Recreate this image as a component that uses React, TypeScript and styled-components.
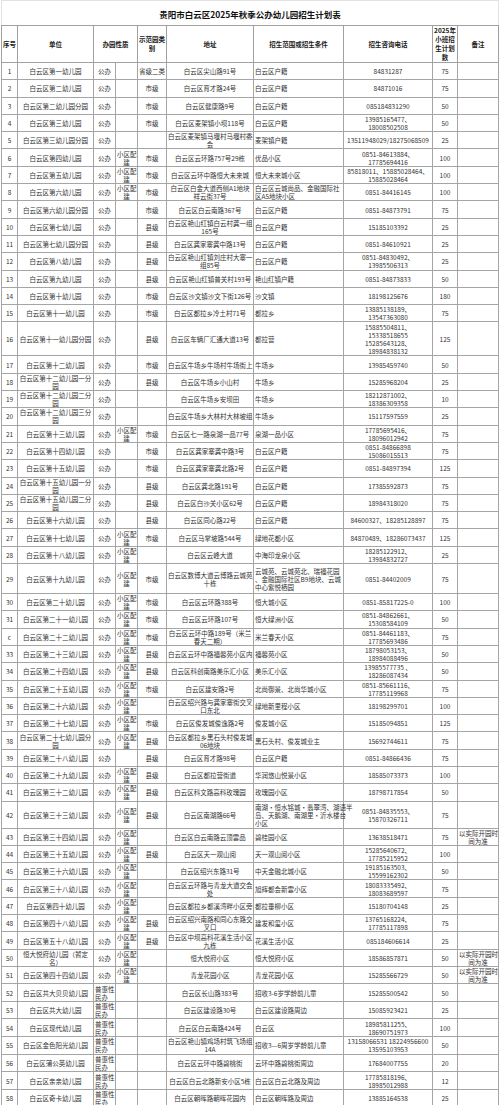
import React from "react";
import styled, { createGlobalStyle } from "styled-components";

const GlobalStyle = createGlobalStyle`
  html, body {
    margin: 0;
    padding: 0;
    background: #fff;
  }
  body {
    font-family: "Noto Sans CJK SC", sans-serif;
    color: #333;
  }
`;

const Page = styled.div`
  width: 500px;
  padding: 0 1px;
  box-sizing: border-box;
`;

const Sheet = styled.table`
  width: 497px;
  table-layout: fixed;
  border-collapse: collapse;
  font-size: 6.5px;
  line-height: 8px;
`;

const TitleCell = styled.th`
  height: 22px;
  padding: 2px 0 0;
  border: 1px solid #e2e2e2;
  border-bottom-color: #a0a0a0;
  font-size: 8.5px;
  line-height: 10px;
  font-weight: 700;
  color: #111;
  text-align: center;
`;

const HeadCell = styled.th`
  height: 35px;
  padding: 0 1px;
  border: 1px solid #a0a0a0;
  font-weight: 700;
  line-height: 9px;
  color: #222;
  text-align: center;
  vertical-align: middle;
`;

const Cell = styled.td<{ $align?: "left" | "center"; $h?: number }>`
  height: ${(p) => p.$h ?? 16.3}px;
  padding: 0 1px;
  border: 1px solid #a5a5a5;
  text-align: ${(p) => p.$align ?? "center"};
  vertical-align: middle;
  white-space: nowrap;
  overflow: visible;
  color: #333;
`;

const Text = styled.div`
  line-height: 8px;
`;

const widths = [16, 76, 22, 22, 29, 87, 90, 89, 25, 41];

// 序号, 单位, 办园性质, 配建, 示范园类别, 地址, 招生范围, 电话, 计划数, 备注, 行高
type Row = [string, string, string, string, string, string, string, string, string, string?, number?];

const B = "小区配|建";
const G = "公办";
const P = "普惠性|民办";
const HJ = "白云区户籍";
const NOTE = "以实际开园时|间为准";

const rows: Row[] = [
  ["1", "白云区第一幼儿园", G, "", "省级二类", "白云区尖山路91号", HJ, "84831287", "75"],
  ["2", "白云区第二幼儿园", G, "", "市级", "白云区育才路24号", HJ, "84871016", "75"],
  ["3", "白云区第二幼儿园分园", G, "", "市级", "白云区健康路9号", HJ, "085184831290", "50"],
  ["4", "白云区第三幼儿园", G, "", "市级", "白云区麦架镇小坝118号", HJ, "13985165477、|18008502508", "50"],
  ["5", "白云区第三幼儿园分园", G, "", "", "白云区麦架镇马堰村马堰村委|会", "麦架镇户籍", "13511948029/18275068509", "25"],
  ["6", "白云区第四幼儿园", G, B, "市级", "白云区云环路757号29栋", "优品小区", "0851-84613884、|17785694416", "100"],
  ["7", "白云区第五幼儿园", G, B, "市级", "白云区云环中路恒大未来城", "恒大未来城小区", "85818011、15885028464、|15885028464", "100"],
  ["8", "白云区第六幼儿园", G, B, "市级", "白云区白金大道西侧A1地块|祥云街37号", "白云区云城尚品、金融国际社|区A5地块小区", "0851-84416145", "100"],
  ["9", "白云区第六幼儿园分园", G, "", "市级", "白云区白云南路367号", HJ, "0851-84873791", "75"],
  ["10", "白云区第七幼儿园", G, "", "县级", "白云区艳山红镇白云村龚一组|165号", HJ, "15185103392", "25"],
  ["11", "白云区第七幼儿园分园", G, "", "县级", "白云区龚家寨龚中路13号", HJ, "0851-84610921", "25"],
  ["12", "白云区第八幼儿园", G, "", "县级", "白云区艳山红镇刘庄村大寨一|组85号", HJ, "0851-84830492、|13985506313", "25"],
  ["13", "白云区第九幼儿园", G, "", "县级", "白云区艳山红镇普关村193号", "艳山红镇户籍", "0851-84873833", "50"],
  ["14", "白云区第十幼儿园", G, "", "市级", "白云区沙文镇沙文下街126号", "沙文镇", "18198125676", "180"],
  ["15", "白云区第十一幼儿园", G, "", "市级", "白云区都拉乡冷土村71号", "都拉乡", "13885138189、|13547363080", "75"],
  ["16", "白云区第十一幼儿园分园", G, "", "县级", "白云区车辆厂汇通大道13号", "都拉营", "15885504811、|15338518655|15285643128、|18984838132", "125", "", 33],
  ["17", "白云区第十二幼儿园", G, "", "市级", "白云区牛场乡牛场村牛场街上", "牛场乡", "13985459740", "50"],
  ["18", "白云区第十二幼儿园一分|园", G, "", "县级", "白云区牛场乡小山村", "牛场乡", "15285968204", "25"],
  ["19", "白云区第十二幼儿园二分|园", G, "", "", "白云区牛场乡安坝田", "牛场乡", "18212871002、|18386309358", "10"],
  ["20", "白云区第十二幼儿园三分|园", G, "", "", "白云区牛场乡大林村大林坡组", "牛场乡", "15117597559", "25"],
  ["21", "白云区第十三幼儿园", G, B, "市级", "白云区七一路泉湖一品77号", "泉湖一品小区", "17785695416、|18096012942", "75"],
  ["22", "白云区第十四幼儿园", G, "", "市级", "白云区龚家寨龚中路3号", HJ, "0851-84866898|15086015513", "75"],
  ["23", "白云区第十五幼儿园", G, "", "市级", "白云区龚家寨龚北路2号", HJ, "0851-84897394", "125"],
  ["24", "白云区第十五幼儿园一分|园", G, "", "县级", "白云区龚北路191号", HJ, "17385592873", "75"],
  ["25", "白云区第十五幼儿园二分|园", G, "", "县级", "白云区白沙关小区62号", HJ, "18984318020", "75"],
  ["26", "白云区第十六幼儿园", G, "", "县级", "白云区同心路22号", HJ, "84600327、18285128897", "75"],
  ["27", "白云区第十七幼儿园", G, B, "市级", "白云区马掌坡路544号", "绿地花都小区", "84870489、18286073437", "125"],
  ["28", "白云区第十八幼儿园", G, B, "", "白云区云峰大道", "中海印龙泉小区", "18285122912、|13984832727", "25"],
  ["29", "白云区第十九幼儿园", G, B, "市级", "白云区数博大道云博路云城苑|十栋", "云城苑、云城苑北、瑞福花园|、金融国际社区B9地块、云城|中心紫悦栖园", "0851-84402009", "75", "", 29],
  ["30", "白云区第二十幼儿园", G, B, "市级", "白云区云环路388号", "恒大城小区", "0851-85817225-0", "100"],
  ["31", "白云区第二十一幼儿园", G, B, "市级", "白云区云环路107号", "恒大绿洲小区", "0851-84862661、|15308584109", "50"],
  ["c", "白云区第二十二幼儿园", G, B, "市级", "白云区云环中路189号（米兰|春天二期）", "米兰春天小区", "0851-84461183、|17785693486", "75"],
  ["33", "白云区第二十三幼儿园", G, B, "县级", "白云区云环中路福馨苑小区内", "福馨苑小区", "18798053153、|18984088496", "50"],
  ["34", "白云区第二十四幼儿园", G, B, "县级", "白云区科创南路美乐汇小区", "美乐汇小区", "13985577735 、|18286087434", "50"],
  ["35", "白云区第二十五幼儿园", G, B, "市级", "白云区建安路2号", "北尚御景、北尚华城小区", "0851-85661116、|17785119968", "75"],
  ["36", "白云区第二十六幼儿园", G, B, "", "白云区绍兴路与龚家寨街交叉|口东北", "绿地新里程小区", "18198299701", "100"],
  ["37", "白云区第二十七幼儿园", G, B, "市级", "白云区俊发城俊逸路2号", "俊发城小区", "15185094851", "125"],
  ["38", "白云区第二十七幼儿园分|园", G, B, "县级", "白云区都拉乡黑石头村俊发城|06地块", "黑石头村、俊发城业主", "15692744611", "75"],
  ["39", "白云区第二十八幼儿园", G, "", "县级", "白云区育才路98号", HJ, "0851-84866436", "75"],
  ["40", "白云区第二十九幼儿园", G, B, "县级", "白云区都拉营街道", "华润悠山悦景小区", "18585073373", "100"],
  ["41", "白云区第三十二幼儿园", G, B, "县级", "白云区科文路高科玫瑰园", "玫瑰园小区", "18798717854", "50"],
  ["42", "白云区第三十三幼儿园", G, B, "县级", "白云区南湖路66号", "南湖·恒水铭城·翡翠湾、湖语半|岛、天鹅湖、南湖里·沂水楼台|小区", "0851-84835553、|15870326711", "75", "", 26],
  ["43", "白云区第三十四幼儿园", G, B, "", "白云区白云南路云顶雲品", "碧桂园小区", "13638518471", "75", NOTE],
  ["44", "白云区第三十五幼儿园", G, B, "县级", "白云区天一观山阅", "天一观山阅小区", "15285640672、|17785215952", "100"],
  ["45", "白云区第三十六幼儿园", G, B, "", "白云区绍兴东路31号", "中天金融北城小区", "19185163503、|15599162302", "50"],
  ["46", "白云区第三十八幼儿园", G, B, "", "白云区云环路与青龙大道交会|处", "旭辉都会新雲小区", "18083335492、|18083689597", "75"],
  ["47", "白云区第四十幼儿园", G, B, "", "白云区都拉乡都溪湾畔小区旁", "都拉垂柳小区", "15180704148", "25"],
  ["48", "白云区第四十八幼儿园", G, B, "县级", "白云区绍兴南路和同心东路交|叉口", "建发和玺小区", "13765168224、|17785117898", "75"],
  ["49", "白云区第五十八幼儿园", G, B, "县级", "白云区中坝高科花溪生活小区|九栋", "花溪生活小区", "085184606614", "25"],
  ["50", "恒大悦府幼儿园（暂定|名）", G, B, "", "恒大悦府小区", "恒大悦府小区", "18586857871", "50", NOTE],
  ["51", "白云区第四十四幼儿园", G, B, "", "青龙花园小区", "青龙花园小区", "15285566729", "50", NOTE],
  ["52", "白云区共大贝贝幼儿园", P, "", "", "白云区长山路383号", "招收3-6岁学龄前儿童", "15285500542", "50", "", 16.6],
  ["53", "白云区共大幼儿园", P, "", "", "白云区建设路30号", "白云区建设路周边", "15085923421", "25", "", 16.6],
  ["54", "白云区现代幼儿园", P, "", "", "白云区白云南路424号", "白云区", "18985811255、|18690751973", "100", "", 16.6],
  ["55", "白云区金色阳光幼儿园", P, "", "", "白云区艳山镇鸡场村筑飞场组|14A", "招收3—6周岁学龄前儿童", "13158066531 18224956600|13595103953", "50", "", 16.6],
  ["56", "白云区蒲公英幼儿园", P, "", "", "白云区云环中路碧桃街", "云环中路碧桃街周边", "17684007755", "20", "", 16.6],
  ["57", "白云区亲亲幼儿园", P, "", "", "白云区白云北路新安小区5栋", "白云区白云北路及周边", "17785818196、|18985012988", "12", "", 16.6],
  ["58", "白云区奇卡幼儿园", P, "", "", "白云区朝晖路朝晖花园内", "白云区朝晖路及周边", "13885164538", "25", "", 16.6],
];

const Lines = ({ text }: { text: string }) => (
  <Text>
    {text.split("|").map((line, i) => (
      <React.Fragment key={i}>
        {i > 0 && <br />}
        {line}
      </React.Fragment>
    ))}
  </Text>
);

export default function App() {
  return (
    <Page>
      <GlobalStyle />
      <Sheet>
        <colgroup>
          {widths.map((w, i) => (
            <col key={i} style={{ width: w }} />
          ))}
        </colgroup>
        <thead>
          <tr>
            <TitleCell colSpan={10}>贵阳市白云区2025年秋季公办幼儿园招生计划表</TitleCell>
          </tr>
          <tr>
            <HeadCell>序号</HeadCell>
            <HeadCell>单位</HeadCell>
            <HeadCell colSpan={2}>办园性质</HeadCell>
            <HeadCell>
              示范园类
              <br />别
            </HeadCell>
            <HeadCell>地址</HeadCell>
            <HeadCell>招生范围或招生条件</HeadCell>
            <HeadCell>招生咨询电话</HeadCell>
            <HeadCell>
              2025年
              <br />
              小班招
              <br />
              生计划
              <br />数
            </HeadCell>
            <HeadCell>备注</HeadCell>
          </tr>
        </thead>
        <tbody>
          {rows.map((r) => {
            const [no, name, kind, built, level, addr, range, phone, plan, note, h] = r;
            return (
              <tr key={no + name}>
                <Cell $h={h}>{no}</Cell>
                <Cell $h={h}>
                  <Lines text={name} />
                </Cell>
                <Cell $h={h} $align={kind === G ? "center" : "left"}>
                  <Lines text={kind} />
                </Cell>
                <Cell $h={h}>
                  <Lines text={built} />
                </Cell>
                <Cell $h={h}>{level}</Cell>
                <Cell $h={h}>
                  <Lines text={addr} />
                </Cell>
                <Cell $h={h} $align="left">
                  <Lines text={range} />
                </Cell>
                <Cell $h={h}>
                  <Lines text={phone} />
                </Cell>
                <Cell $h={h}>{plan}</Cell>
                <Cell $h={h}>
                  <Lines text={note ?? ""} />
                </Cell>
              </tr>
            );
          })}
        </tbody>
      </Sheet>
    </Page>
  );
}
